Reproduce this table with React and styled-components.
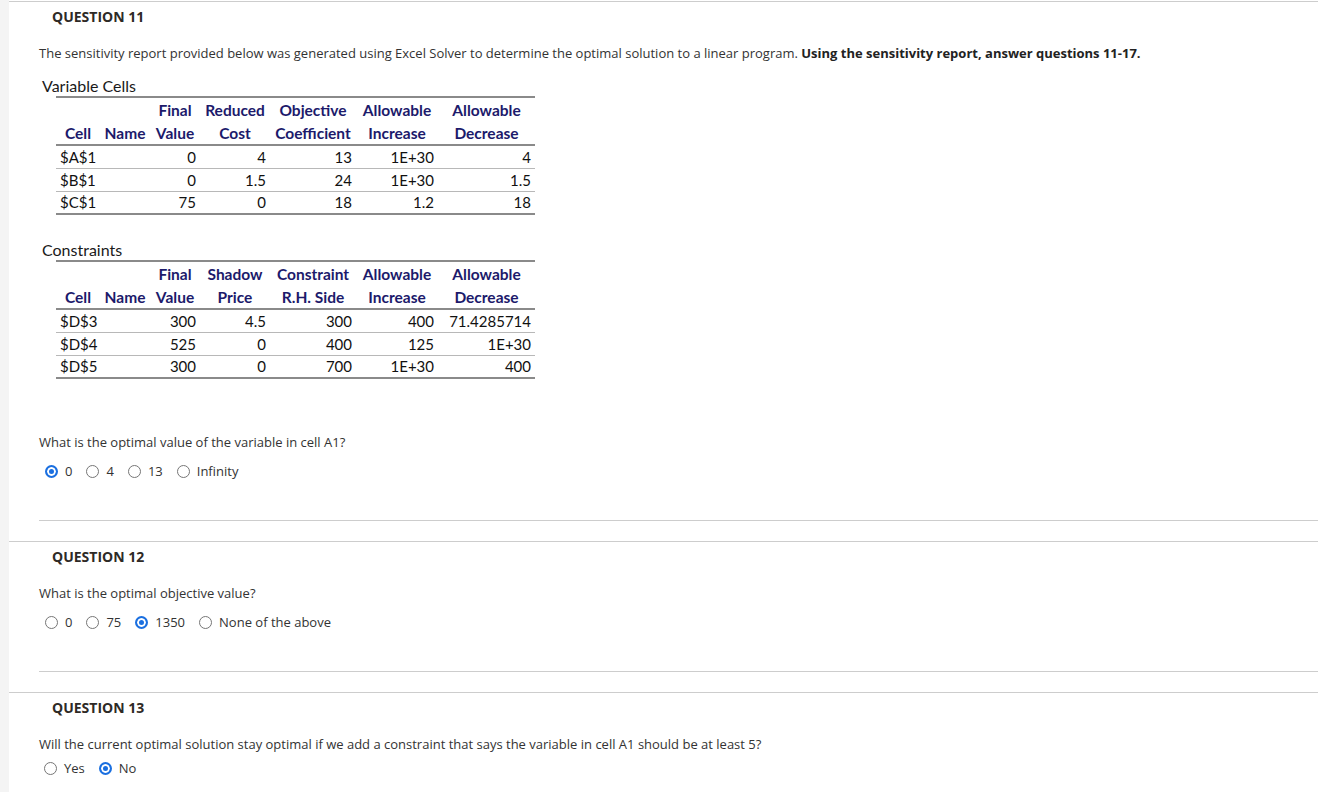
import React from 'react';
import styled, { createGlobalStyle } from 'styled-components';


const variableCells = {
    title: "Variable Cells",
    headers: [
        ["", "", "Final", "Reduced", "Objective", "Allowable", "Allowable"],
        ["Cell", "Name", "Value", "Cost", "Coefficient", "Increase", "Decrease"]
    ],
    rows: [
        ["$A$1", "", "0", "4", "13", "1E+30", "4"],
        ["$B$1", "", "0", "1.5", "24", "1E+30", "1.5"],
        ["$C$1", "", "75", "0", "18", "1.2", "18"]
    ]
};

const constraints = {
    title: "Constraints",
    headers: [
        ["", "", "Final", "Shadow", "Constraint", "Allowable", "Allowable"],
        ["Cell", "Name", "Value", "Price", "R.H. Side", "Increase", "Decrease"]
    ],
    rows: [
        ["$D$3", "", "300", "4.5", "300", "400", "71.4285714"],
        ["$D$4", "", "525", "0", "400", "125", "1E+30"],
        ["$D$5", "", "300", "0", "700", "1E+30", "400"]
    ]
};

const COLUMN_WIDTHS = [44, 50, 50, 70, 86, 82, 97];


function SensitivityTable({ report }) {
    return (
        <Report>
            <ReportTitle>{report.title}</ReportTitle>
            <Table>
                <colgroup>
                    {COLUMN_WIDTHS.map((w, i) => <col key={i} style={{ width: w }} />)}
                </colgroup>
                <thead>
                    {report.headers.map((row, r) => (
                        <HeadRow key={r} last={r === report.headers.length - 1}>
                            {row.map((text, c) => <HeadCell key={c}>{text}</HeadCell>)}
                        </HeadRow>
                    ))}
                </thead>
                <tbody>
                    {report.rows.map((row, r) => (
                        <DataRow key={r}>
                            {row.map((text, c) => (
                                <DataCell key={c} align={c === 0 ? "left" : "right"}>{text}</DataCell>
                            ))}
                        </DataRow>
                    ))}
                </tbody>
            </Table>
        </Report>
    );
}

function Choices({ name, options, checked, lead = 6 }) {
    return (
        <ChoiceRow lead={lead}>
            {options.map(option => (
                <Choice key={option}>
                    <Radio type="radio" name={name} defaultChecked={option === checked} />
                    {option}
                </Choice>
            ))}
        </ChoiceRow>
    );
}

function Question({ number, children }) {
    return (
        <Section>
            <Heading>QUESTION {number}</Heading>
            <Answer>{children}</Answer>
        </Section>
    );
}

export default function App() {
    return (
        <>
            <GlobalStyle />
            <Page>
                <Rail />
                <Main>
                    <Question number={11}>
                        <Intro>
                            The sensitivity report provided below was generated using Excel Solver to determine the optimal solution to a linear program.{" "}
                            <strong>Using the sensitivity report, answer questions 11-17.</strong>
                        </Intro>
                        <SensitivityTable report={variableCells} />
                        <SensitivityTable report={constraints} />
                        <Prompt top={54}>What is the optimal value of the variable in cell A1?</Prompt>
                        <Choices name="q11" options={["0", "4", "13", "Infinity"]} checked="0" />
                    </Question>
                    <Question number={12}>
                        <Prompt>What is the optimal objective value?</Prompt>
                        <Choices name="q12" options={["0", "75", "1350", "None of the above"]} checked="1350" />
                    </Question>
                    <Question number={13}>
                        <Prompt gap={5}>
                            Will the current optimal solution stay optimal if we add a constraint that says the variable in cell A1 should be at least 5?
                        </Prompt>
                        <Choices name="q13" options={["Yes", "No"]} checked="No" lead={5} />
                    </Question>
                </Main>
            </Page>
        </>
    );
}

const GlobalStyle = createGlobalStyle`
    html, body {
        margin: 0;
        padding: 0;
        background: #fff;
    }
    body {
        font-family: "Open Sans", "Noto Sans", sans-serif;
        color: #333;
    }
`;

const Page = styled.div`
    display: flex;
    min-height: 792px;
`;

const Rail = styled.div`
    flex: none;
    width: 9px;
    background: #f4f4f4;
`;

const Main = styled.main`
    flex: 1;
    min-width: 0;
    padding-top: 1px;
`;

const Section = styled.section`
    border-top: 1px solid #cdcdcd;
    padding: 0 0 20px 30px;
`;

const Heading = styled.h2`
    margin: 5px 0 18px 13px;
    font-size: 14px;
    line-height: 19px;
    font-weight: 700;
    color: #2e2a26;
`;

const Answer = styled.div`
    border-bottom: 1px solid #cdcdcd;
    padding-bottom: 39px;
`;

const Intro = styled.p`
    margin: 0;
    font-size: 13px;
    line-height: 18px;
    color: #333;

    strong {
        font-weight: 700;
        color: #222;
    }
`;

const Report = styled.div`
    margin-top: 14px;
    padding-left: 3px;
    font-family: Lato, "Liberation Sans", sans-serif;

    & + & {
        margin-top: 25px;
    }
`;

const ReportTitle = styled.div`
    font-size: 16px;
    line-height: 20px;
    color: #1a1a1a;
`;

const Table = styled.table`
    margin-left: 14px;
    border-collapse: collapse;
    table-layout: fixed;
    width: 479px;
    border-top: 2px solid #8a8a8a;
    border-bottom: 2px solid #8a8a8a;
`;

const HeadRow = styled.tr`
    height: 24px;
    ${props => props.last ? "border-bottom: 2px solid #8a8a8a;" : ""}
`;

const HeadCell = styled.th`
    padding: 0;
    text-align: center;
    white-space: nowrap;
    font-size: 15.5px;
    font-weight: 700;
    color: #1c1a6b;
`;

const DataRow = styled.tr`
    height: 23px;

    & + & {
        border-top: 1px solid #b8b8b8;
    }
`;

const DataCell = styled.td`
    padding: 0 4px;
    text-align: ${props => props.align};
    white-space: nowrap;
    font-size: 15px;
    color: #111;
`;

const Prompt = styled.p`
    margin: ${props => props.top || 0}px 0 ${props => props.gap ?? 10}px;
    font-size: 13px;
    line-height: 18px;
    color: #333;
`;

const ChoiceRow = styled.div`
    display: flex;
    align-items: center;
    gap: 14px;
    height: 20px;
    padding-left: ${props => props.lead}px;
`;

const Choice = styled.label`
    display: inline-flex;
    align-items: center;
    gap: 7px;
    font-size: 13px;
    color: #333;
`;

const Radio = styled.input`
    appearance: none;
    flex: none;
    width: 13px;
    height: 13px;
    margin: 0;
    border: 1px solid #767676;
    border-radius: 50%;
    background: #fff;

    &:checked {
        border: 2px solid #1a6fe0;
        background: #1a6fe0;
        box-shadow: inset 0 0 0 2px #fff;
    }
`;
